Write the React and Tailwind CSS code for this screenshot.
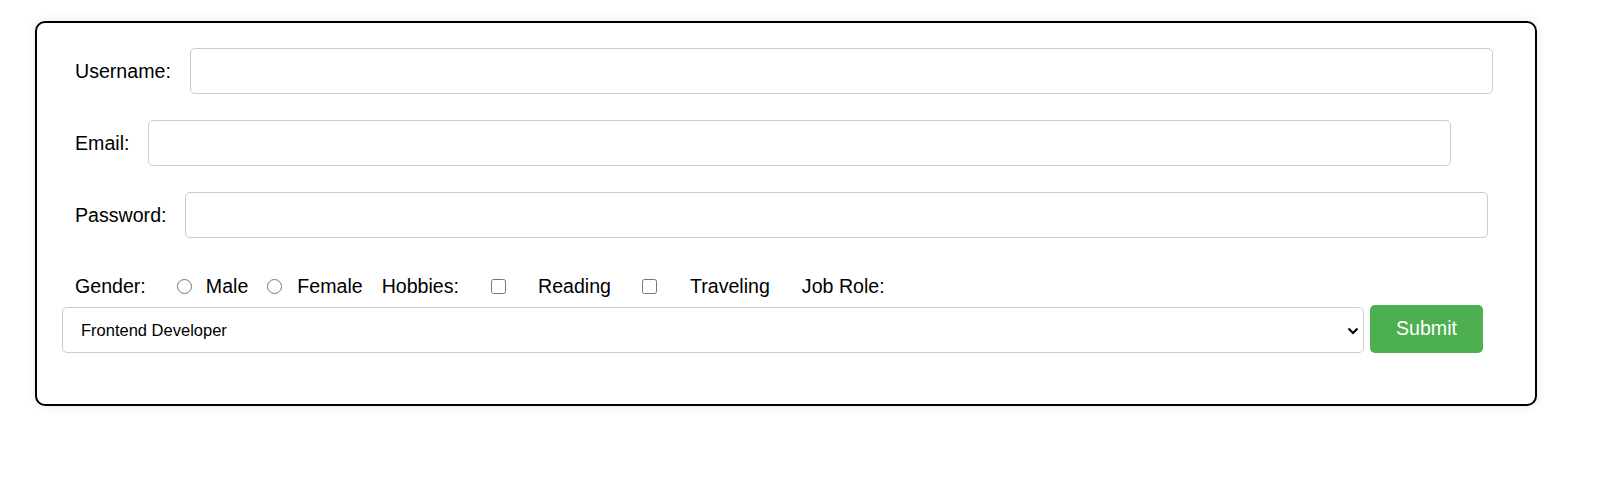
import { useState } from "react"

const font = { fontFamily: '"Liberation Sans", Arial, sans-serif' }

function TextRow({ label, type, className = "" }) {
  return (
    <div className={`flex items-center ${className}`}>
      <label className="ml-[13px] leading-[22px]">{label}</label>
      <input
        type={type}
        className="ml-[19px] h-[46px] w-[1303px] rounded-[5px] border border-[#cccccc] bg-white px-3 outline-none"
      />
    </div>
  )
}

export default function App() {
  const [role, setRole] = useState("frontend")

  return (
    <div className="min-h-[485px] bg-white pt-[21px] pl-[35px] text-black" style={font}>
      <div className="w-[1502px] rounded-[10px] border-2 border-black bg-white px-[25px] pt-[25px] pb-[51px] text-[19.6px] shadow-[0_0_10px_rgba(0,0,0,0.1)]">
        <form onSubmit={(e) => e.preventDefault()}>
          <TextRow label="Username:" type="text" />
          <TextRow label="Email:" type="email" className="mt-[26px]" />
          <TextRow label="Password:" type="password" className="mt-[26px]" />

          {/* gender / hobbies / role */}
          <div className="mt-[37px] flex h-[22px] items-center leading-[22px]">
            <label className="ml-[13px]">Gender:</label>
            <input type="radio" name="gender" className="m-0 ml-[31px] h-[15px] w-[15px]" />
            <label className="ml-[14px]">Male</label>
            <input type="radio" name="gender" className="m-0 ml-[19px] h-[15px] w-[15px]" />
            <label className="ml-[15px]">Female</label>
            <label className="ml-[19px]">Hobbies:</label>
            <input type="checkbox" className="m-0 ml-[32px] h-[15px] w-[15px]" />
            <label className="ml-[32px]">Reading</label>
            <input type="checkbox" className="m-0 ml-[31px] h-[15px] w-[15px]" />
            <label className="ml-[33px]">Traveling</label>
            <label className="ml-[32px]">Job Role:</label>
          </div>

          <div className="mt-[8px] flex items-end">
            <div className="relative h-[46px] w-[1302px]">
              <select
                value={role}
                onChange={(e) => setRole(e.target.value)}
                className="h-full w-full appearance-none rounded-[5px] border border-[#cccccc] bg-white pl-[18px] text-[16.5px] text-black outline-none"
                style={font}
              >
                <option value="frontend">Frontend Developer</option>
                <option value="backend">Backend Developer</option>
                <option value="fullstack">Full Stack Developer</option>
              </select>
              <svg
                className="pointer-events-none absolute right-[5px] top-[20px]"
                width="12"
                height="8"
                viewBox="0 0 12 8"
                fill="none"
              >
                <polyline points="1.5,1.5 6,6 10.5,1.5" stroke="#000" strokeWidth="2.2" />
              </svg>
            </div>
            <button
              type="submit"
              className="ml-[6px] h-[48px] w-[113px] rounded-[5px] bg-[#4caf50] text-[19.6px] text-white"
            >
              Submit
            </button>
          </div>
        </form>
      </div>
    </div>
  )
}
